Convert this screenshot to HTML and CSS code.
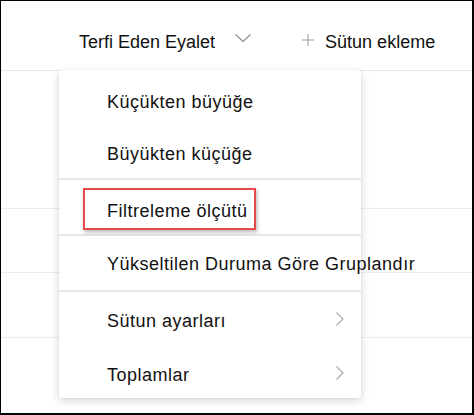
FILE: index.html
```html
<!DOCTYPE html>
<html lang="tr">
<head>
<meta charset="utf-8">
<link rel="stylesheet" href="styles.css">
</head>
<body>
<div class="frame">
  <div class="header">
    <span class="col-title">Terfi Eden Eyalet</span>
    <svg class="chev-down" width="16" height="8" viewBox="0 0 16 8"><path d="M0.5 0.5 L8 7.5 L15.5 0.5" fill="none" stroke="#8a8a8a" stroke-width="1.1"/></svg>
    <svg class="plus" width="12" height="12" viewBox="0 0 12 12"><path d="M6 0 V12 M0 6 H12" fill="none" stroke="#9a9a9a" stroke-width="1"/></svg>
    <span class="add-col">Sütun ekleme</span>
  </div>
  <div class="row row-1"></div>
  <div class="row row-2"></div>
  <div class="row row-3"></div>
  <div class="row row-4"></div>

  <div class="menu">
    <div class="group">
      <div class="item item-a">Küçükten büyüğe</div>
      <div class="item item-b">Büyükten küçüğe</div>
    </div>
    <div class="group">
      <div class="item item-c">Filtreleme ölçütü<span class="highlight"></span></div>
    </div>
    <div class="group">
      <div class="item item-d">Yükseltilen Duruma Göre Gruplandır</div>
    </div>
    <div class="group">
      <div class="item item-e"><span>Sütun ayarları</span><svg class="chev-right" width="8" height="14" viewBox="0 0 8 14"><path d="M0.5 0.5 L7 7 L0.5 13.5" fill="none" stroke="#a6a6a6" stroke-width="1.1"/></svg></div>
      <div class="item item-f"><span>Toplamlar</span><svg class="chev-right" width="8" height="14" viewBox="0 0 8 14"><path d="M0.5 0.5 L7 7 L0.5 13.5" fill="none" stroke="#a6a6a6" stroke-width="1.1"/></svg></div>
    </div>
  </div>
</div>
</body>
</html>
```
FILE: styles.css
```css
* { box-sizing: border-box; }
html, body { margin: 0; padding: 0; background: #fff; }
body {
  font-family: "Liberation Sans", Arial, sans-serif;
  font-size: 18px;
  line-height: 20px;
  color: #111;
}
.frame {
  position: relative;
  width: 474px;
  height: 415px;
  border-top: 1px solid #000;
  border-left: 1px solid #000;
  border-right: 2px solid #000;
  border-bottom: 2px solid #000;
  overflow: hidden;
}
.header {
  display: flex;
  align-items: flex-start;
  height: 70px;
  padding: 31px 0 0 78px;
  border-bottom: 1px solid #e8e8e8;
  white-space: nowrap;
}
.chev-down { margin: 2px 0 0 20px; display: block; }
.plus { margin: 2px 0 0 51px; display: block; }
.add-col { margin-left: 11px; }
.row { border-bottom: 1px solid #ececec; }
.row-1 { height: 138px; }
.row-2 { height: 64px; }
.row-3 { height: 65px; }
.row-4 { height: 76px; border-bottom: none; }

.menu {
  position: absolute;
  left: 58px;
  top: 69px;
  width: 302px;
  background: #fff;
  border-radius: 3px;
  letter-spacing: 0.5px;
  box-shadow: 0 3px 10px rgba(0,0,0,0.16), 0 0 3px rgba(0,0,0,0.06);
}
.group + .group { border-top: 2px solid #e6e6e6; }
.item {
  position: relative;
  display: flex;
  align-items: flex-start;
  padding-left: 48px;
  padding-right: 17px;
  white-space: nowrap;
}
.item-a { padding-top: 22px; padding-bottom: 16px; }
.item-b { padding-top: 16px; padding-bottom: 14px; }
.item-c { padding-top: 21px; padding-bottom: 13px; }
.item-d { padding-top: 18px; padding-bottom: 16px; }
.item-e { padding-top: 19px; padding-bottom: 14px; }
.item-f { padding-top: 20px; padding-bottom: 13px; }
.chev-right { display: block; margin: 1px 0 0 auto; }
.highlight {
  position: absolute;
  left: 24px;
  top: 8px;
  width: 173px;
  height: 42px;
  border: 2px solid #e8474c;
  box-shadow: 1px 2px 4px rgba(0,0,0,0.3);
}
```
